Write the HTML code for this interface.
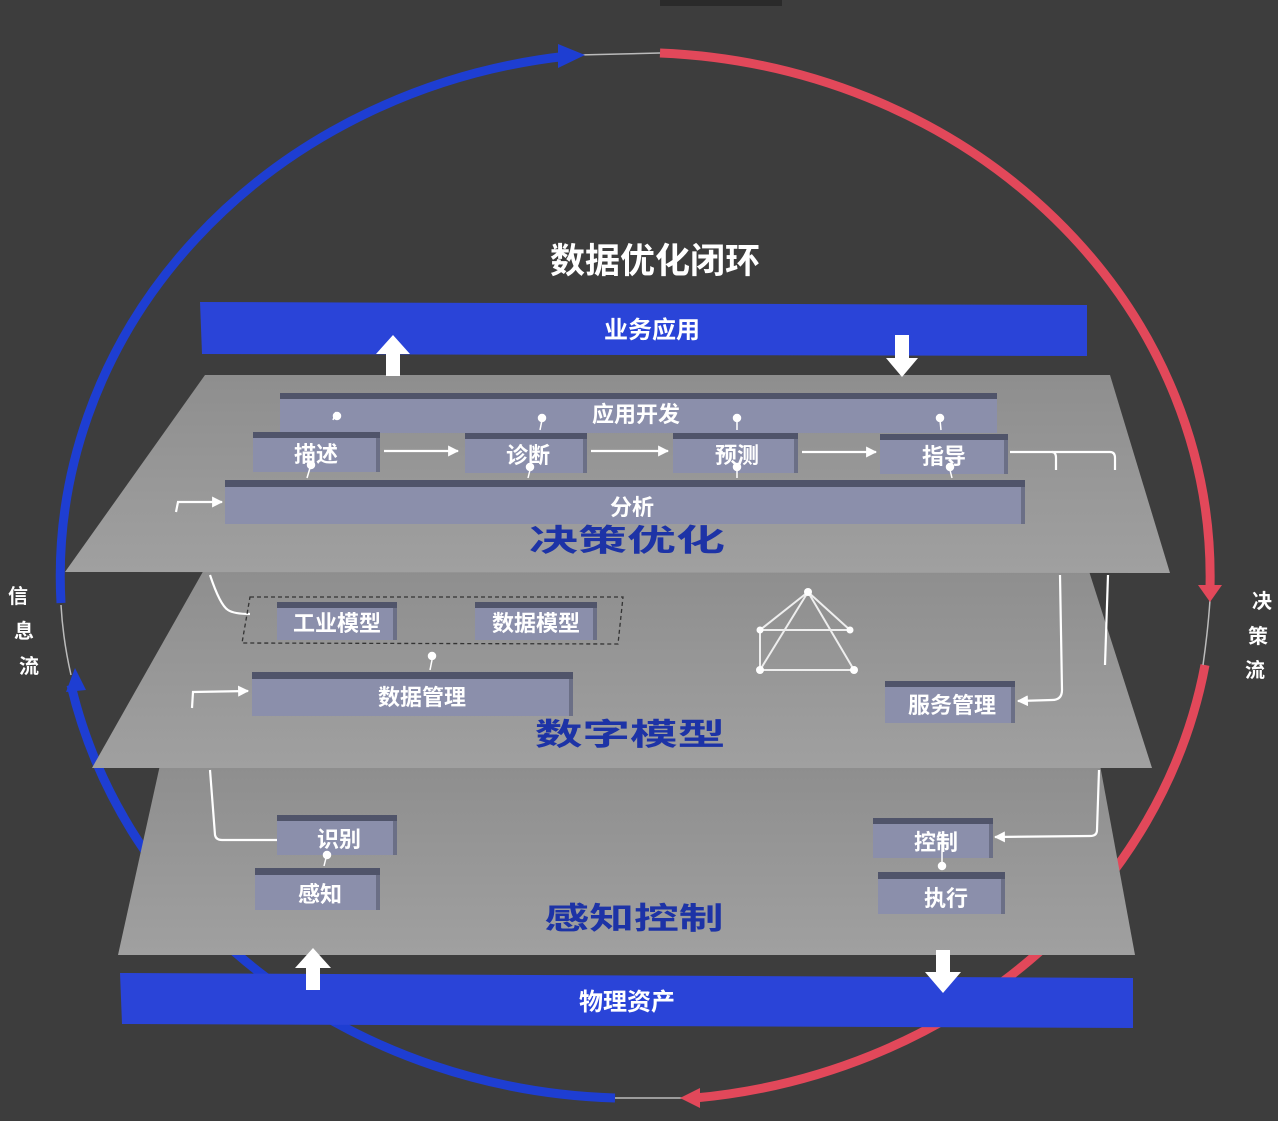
<!DOCTYPE html>
<html><head><meta charset="utf-8"><style>
html,body{margin:0;padding:0;background:#3d3d3d;}
svg{display:block}
text{font-family:"Liberation Sans","Noto Sans CJK SC",sans-serif;font-weight:bold}
</style></head><body>
<svg width="1278" height="1121" viewBox="0 0 1278 1121" xmlns="http://www.w3.org/2000/svg">
<defs>
<linearGradient id="pl" x1="0" y1="0" x2="0" y2="1"><stop offset="0" stop-color="#8e8e8e"/><stop offset="1" stop-color="#a0a0a0"/></linearGradient>
<marker id="wa" viewBox="0 0 10 10" refX="9" refY="5" markerWidth="5" markerHeight="5" orient="auto"><path d="M0,0L10,5L0,10z" fill="#fff"/></marker>
</defs>
<rect width="1278" height="1121" fill="#3d3d3d"/>
<rect x="660" y="0" width="122" height="6" fill="#2a2a2a"/>
<g fill="none" stroke-width="9" stroke-linecap="butt">
<path d="M568,56 A576,524 0 0 0 61,603" stroke="#1e3ed2"/>
<path d="M71,685 A576,524 0 0 0 615,1098" stroke="#1e3ed2"/>
<path d="M660,53 A576,524 0 0 1 1210,588" stroke="#e2485a"/>
<path d="M1205,665 A576,524 0 0 1 695,1098" stroke="#e2485a"/>
</g>
<g stroke="#bbb" stroke-width="1.5" fill="none">
<path d="M578,55 L660,53"/><path d="M61,605 Q63,640 71,675"/><path d="M1210,600 Q1208,630 1203,665"/><path d="M615,1098 L685,1098"/>
</g>
<path d="M558,44 L585,55 L558,68z" fill="#1e3ed2"/>
<path d="M66,692 L75,668 L86,690z" fill="#1e3ed2"/>
<path d="M1198,585 L1210,602 L1222,585z" fill="#e2485a"/>
<path d="M700,1088 L680,1098 L700,1108z" fill="#e2485a"/>
<text x="655" y="273" fill="#fff" font-size="35" text-anchor="middle">数据优化闭环</text>
<polygon points="200,302 1087,305 1087,356 202,354" fill="#2a44d8"/>
<text x="652" y="338" fill="#fff" font-size="24" text-anchor="middle">业务应用</text>
<polygon points="160,765 1100,765 1135,955 118,955" fill="url(#pl)"/>
<polygon points="205,568 1088,568 1152,768 92,768" fill="url(#pl)"/>
<polygon points="205,375 1110,375 1170,573 65,572" fill="url(#pl)"/>
<path d="M386,376 L386,354 L376,354 L393,335 L410,354 L400,354 L400,376z" fill="#fff"/>
<path d="M895,335 L909,335 L909,358 L918,358 L902,377 L886,358 L895,358z" fill="#fff"/>
<polygon points="120,973 1133,978 1133,1028 122,1024" fill="#2a44d8"/>
<text x="627" y="1010" fill="#fff" font-size="24" text-anchor="middle">物理资产</text>
<path d="M306,990 L306,968 L295,968 L313,948 L331,968 L320,968 L320,990z" fill="#fff"/>
<path d="M936,950 L950,950 L950,972 L961,972 L943,993 L925,972 L936,972z" fill="#fff"/>
<g fill="#8b8fab">
<rect x="280" y="393" width="717" height="40"/>
<rect x="253" y="432" width="127" height="40"/>
<rect x="465" y="433" width="122" height="40"/>
<rect x="673" y="433" width="125" height="40"/>
<rect x="880" y="434" width="128" height="40"/>
<rect x="225" y="480" width="800" height="44"/>
<rect x="277" y="602" width="120" height="38"/>
<rect x="475" y="602" width="122" height="38"/>
<rect x="252" y="672" width="321" height="44"/>
<rect x="885" y="681" width="130" height="42"/>
<rect x="277" y="815" width="120" height="40"/>
<rect x="255" y="868" width="125" height="42"/>
<rect x="873" y="818" width="120" height="40"/>
<rect x="878" y="872" width="127" height="42"/>
</g>
<g fill="#50546a">
<rect x="280" y="393" width="717" height="6"/>
<rect x="253" y="432" width="127" height="6"/>
<rect x="465" y="433" width="122" height="6"/>
<rect x="673" y="433" width="125" height="6"/>
<rect x="880" y="434" width="128" height="6"/>
<rect x="225" y="480" width="800" height="7"/>
<rect x="277" y="602" width="120" height="6"/>
<rect x="475" y="602" width="122" height="6"/>
<rect x="252" y="672" width="321" height="7"/>
<rect x="885" y="681" width="130" height="6"/>
<rect x="277" y="815" width="120" height="6"/>
<rect x="255" y="868" width="125" height="7"/>
<rect x="873" y="818" width="120" height="6"/>
<rect x="878" y="872" width="127" height="7"/>
</g>
<g fill="#6b6f86">
<rect x="376" y="438" width="4" height="34"/><rect x="583" y="439" width="4" height="34"/><rect x="794" y="439" width="4" height="34"/><rect x="1004" y="440" width="4" height="34"/>
<rect x="393" y="608" width="4" height="32"/><rect x="593" y="608" width="4" height="32"/><rect x="393" y="821" width="4" height="34"/><rect x="376" y="875" width="4" height="35"/><rect x="989" y="824" width="4" height="34"/><rect x="1001" y="879" width="4" height="35"/><rect x="1011" y="687" width="4" height="36"/><rect x="569" y="679" width="4" height="37"/><rect x="1021" y="487" width="4" height="37"/>
</g>
<g fill="#fff" font-size="22" text-anchor="middle">
<text x="636" y="422">应用开发</text>
<text x="316" y="462">描述</text>
<text x="528" y="463">诊断</text>
<text x="737" y="463">预测</text>
<text x="944" y="464">指导</text>
<text x="632" y="515">分析</text>
<text x="337" y="631">工业模型</text>
<text x="536" y="631">数据模型</text>
<text x="422" y="705">数据管理</text>
<text x="952" y="713">服务管理</text>
<text x="339" y="847">识别</text>
<text x="320" y="902">感知</text>
<text x="936" y="850">控制</text>
<text x="946" y="906">执行</text>
</g>
<g fill="#1d33a6" font-size="28" text-anchor="middle">
<text transform="translate(627,551) scale(1.75,1.1)">决策优化</text>
<text transform="translate(630,745) scale(1.7,1.1)">数字模型</text>
<text transform="translate(634,929) scale(1.6,1.1)">感知控制</text>
</g>
<g fill="#fff" font-size="20" text-anchor="middle">
<text x="18" y="603">信</text><text x="24" y="638">息</text><text x="29" y="673">流</text>
<text x="1262" y="608">决</text><text x="1258" y="643">策</text><text x="1255" y="677">流</text>
</g>
<g stroke="#fff" stroke-width="2.2" fill="none">
<path d="M384,451 L458,451" marker-end="url(#wa)"/>
<path d="M591,451 L668,451" marker-end="url(#wa)"/>
<path d="M802,452 L876,452" marker-end="url(#wa)"/>
<path d="M176,512 L178,502 L222,502" marker-end="url(#wa)"/>
<path d="M1010,452 L1110,452 Q1115,452 1115,458 L1115,470"/>
<path d="M1052,452 Q1056,452 1056,458 L1056,470"/>
<path d="M1060,575 L1062,690 Q1062,700 1052,700 L1018,701" marker-end="url(#wa)"/>
<path d="M1108,575 L1105,665"/>
<path d="M1099,770 L1097,830 Q1097,836 1090,836 L995,837" marker-end="url(#wa)"/>
<path d="M210,575 Q220,605 228,610 Q234,614 250,614"/>
<path d="M192,708 L193,692 L248,691" marker-end="url(#wa)"/>
<path d="M210,770 L215,835 Q216,840 222,840 L277,840"/>
</g>
<g stroke="#fff" stroke-width="1.5" fill="#fff">
<path d="M333,420 L336,412" fill="none"/><circle cx="337" cy="416" r="3.5"/>
<path d="M540,430 L542,420" fill="none"/><circle cx="542" cy="418" r="3.5"/>
<path d="M737,430 L737,420" fill="none"/><circle cx="737" cy="418" r="3.5"/>
<path d="M941,430 L940,420" fill="none"/><circle cx="940" cy="418" r="3.5"/>
<path d="M307,478 L310,468" fill="none"/><circle cx="311" cy="465" r="3.5"/>
<path d="M528,478 L530,470" fill="none"/><circle cx="530" cy="467" r="3.5"/>
<path d="M737,478 L737,470" fill="none"/><circle cx="737" cy="467" r="3.5"/>
<path d="M952,478 L950,470" fill="none"/><circle cx="950" cy="467" r="3.5"/>
<path d="M430,670 L432,660" fill="none"/><circle cx="432" cy="656" r="3.5"/>
<path d="M324,866 L326,858" fill="none"/><circle cx="327" cy="855" r="3.5"/>
<path d="M942,836 L942,864" fill="none"/><circle cx="942" cy="866" r="3.5"/>
</g>
<polygon points="250,597 623,597 618,644 242,643" fill="none" stroke="#333" stroke-width="1.3" stroke-dasharray="4,3"/>
<g stroke="#eee" stroke-width="2" fill="none">
<path d="M808,592 L760,670 M808,592 L854,670 M760,630 L850,630 M760,670 L854,670 M808,592 L760,630 M808,592 L850,630 M760,630 L760,670"/>
</g>
<g fill="#fff"><circle cx="808" cy="592" r="4"/><circle cx="760" cy="630" r="3.5"/><circle cx="850" cy="630" r="3.5"/><circle cx="760" cy="670" r="4"/><circle cx="854" cy="670" r="4"/></g>
</svg>
</body></html>
